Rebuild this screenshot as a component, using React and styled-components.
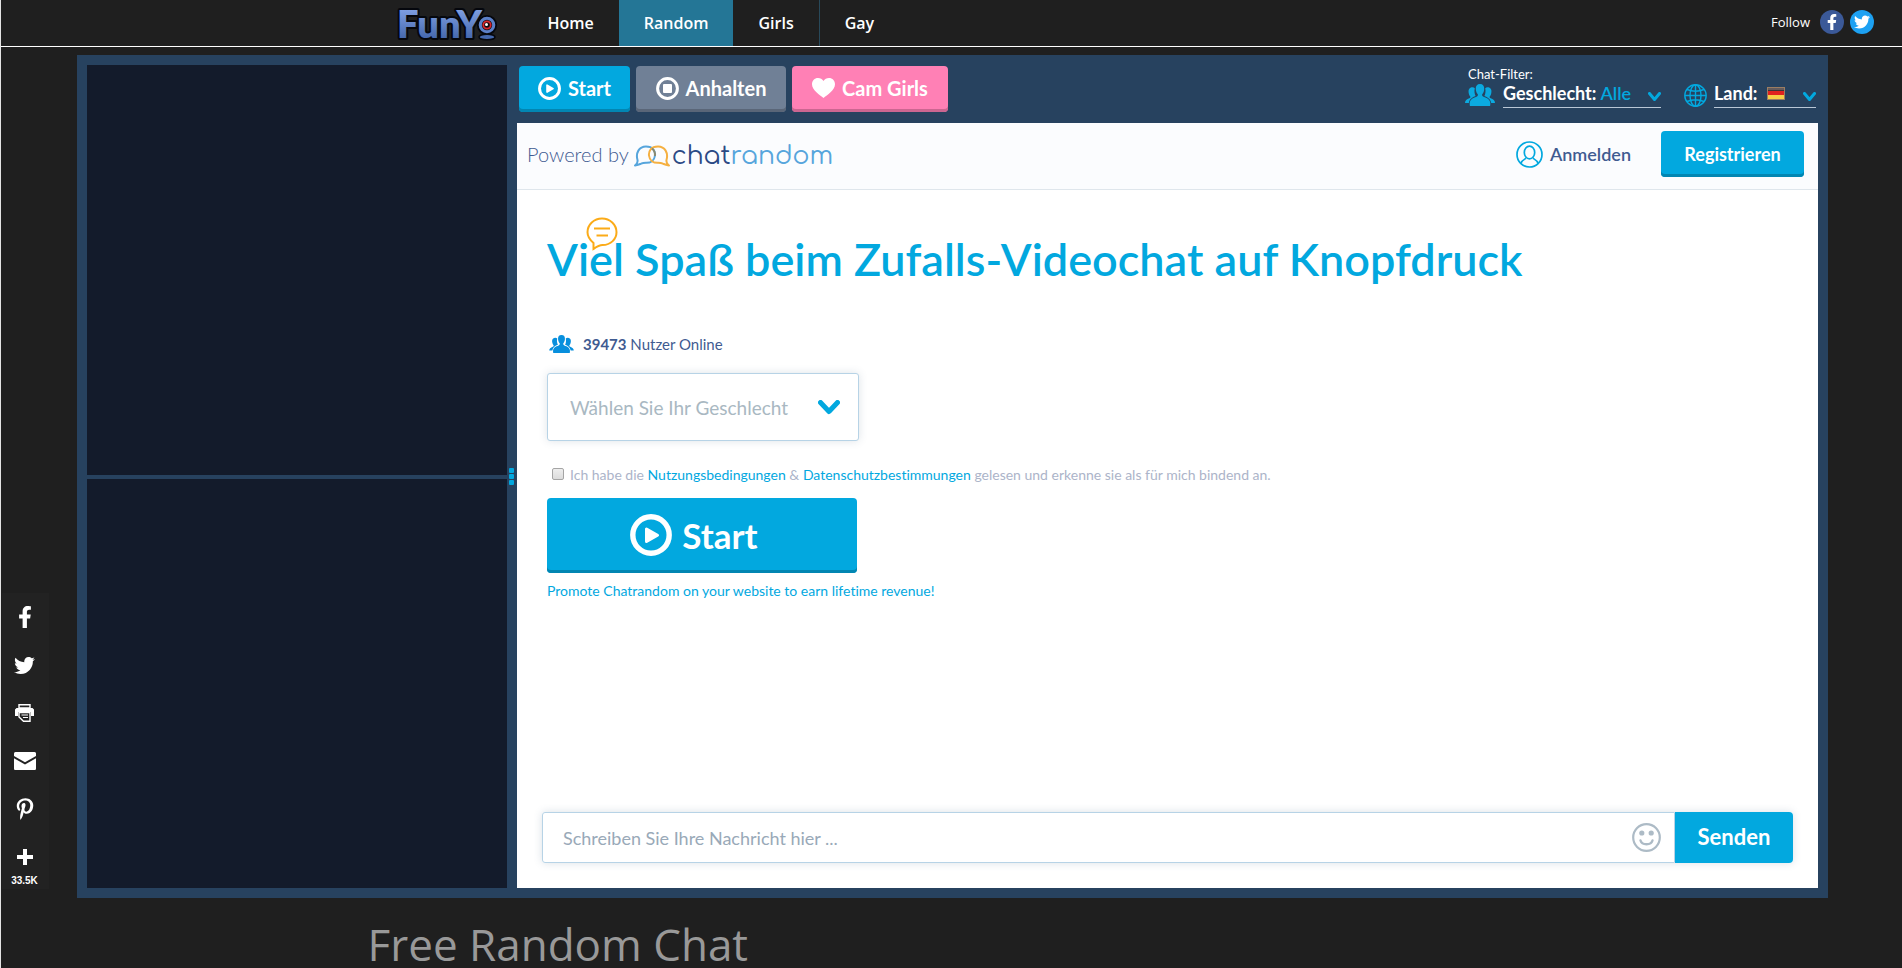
import React from "react";
import styled, { createGlobalStyle, css } from "styled-components";
import { FaFacebookF, FaTwitter, FaPinterestP } from "react-icons/fa";

const BLUE = "#02a8df";
const FACE = `Lato, "Open Sans", sans-serif`;
const NAV_FACE = `"Open Sans", "Noto Sans", sans-serif`;

const GlobalStyle = createGlobalStyle`
  * { box-sizing: border-box; }
  body { margin: 0; background: #1f1f1f; font-family: ${FACE}; font-variant-ligatures: none; }
  button, input, select { font-family: inherit; }
  a { text-decoration: none; }
`;

const Page = styled.div`
  min-height: 100vh;
  border-left: 1px solid #e4e4e4;
  display: flex;
  flex-direction: column;
`;

/* ---------- site header ---------- */
const Header = styled.header`
  display: grid;
  grid-template-columns: 1fr minmax(auto, 1170px) 1fr;
  height: 47px;
  border-bottom: 1px solid #fff;
  font-family: ${NAV_FACE};
`;
const Bar = styled.div`
  grid-column: 2;
  display: flex;
  padding-left: 29px;
`;
const LogoLink = styled.a`
  display: flex;
  align-items: center;
  width: 127px;
  svg { display: block; overflow: visible; }
`;
const Nav = styled.nav`
  display: flex;
`;
const NavLink = styled.a`
  display: flex;
  align-items: center;
  padding: 0 25px;
  font-size: 16px;
  font-weight: 600;
  color: #fff;
  background: ${(p) => (p.$active ? "#247696" : "transparent")};
  border-right: ${(p) => (p.$divided ? "1px solid #28495a" : "0")};
`;
const Follow = styled.div`
  display: flex;
  align-items: center;
  justify-content: flex-end;
  gap: 6px;
  padding-right: 28px;
  padding-bottom: 2px;
  font-size: 13px;
  color: #fff;
  span { margin-right: 4px; }
`;
const Round = styled.a`
  display: grid;
  place-items: center;
  width: 24px;
  height: 24px;
  border-radius: 50%;
  color: #fff;
  background: ${(p) => p.$color};
`;

/* ---------- chat frame ---------- */
const Frame = styled.main`
  display: flex;
  gap: 10px;
  margin: 8px 74px 0 76px;
  padding: 10px;
  min-height: calc(100vh - 125px);
  background: #27425f;
`;
const Cameras = styled.section`
  position: relative;
  flex: 0 0 420px;
  display: flex;
  flex-direction: column;
  gap: 4px;
`;
const Camera = styled.div`
  flex: 1;
  background: #131b2b;
`;
const Grip = styled.div`
  position: absolute;
  left: 100%;
  top: 50%;
  margin: -9px 0 0 2px;
  display: grid;
  gap: 1px;
  i { width: 5px; height: 5px; border-radius: 1px; background: ${BLUE}; }
`;
const Chat = styled.section`
  flex: 1;
  min-width: 0;
  display: flex;
  flex-direction: column;
`;
const Toolbar = styled.div`
  display: flex;
  justify-content: space-between;
  height: 58px;
  padding: 1px 2px 0;
`;
const Group = styled.div`
  display: flex;
  gap: 6px;
`;
const solid = css`
  display: flex;
  align-items: center;
  justify-content: center;
  border: 0;
  border-radius: 4px;
  color: #fff;
  font-weight: 700;
  background: ${(p) => p.$color || BLUE};
  box-shadow: inset 0 -3px 0 ${(p) => p.$edge || "#0286b2"};
`;
const ToolButton = styled.button`
  ${solid}
  height: 46px;
  width: ${(p) => p.$width};
  gap: 7px;
  padding: 0 0 2px;
  font-size: 20px;
`;
const Filters = styled.div`
  display: grid;
  grid-template-columns: auto auto;
  column-gap: 23px;
  grid-template-rows: 18px 24px;
  align-content: start;
`;
const FilterTitle = styled.div`
  grid-column: 1 / -1;
  padding-left: 3px;
  font-size: 13px;
  line-height: 16px;
  color: #fff;
`;
const Filter = styled.div`
  display: flex;
  gap: ${(p) => p.$gap};
  svg { flex: none; }
`;
const FilterField = styled.label`
  position: relative;
  display: flex;
  gap: 4px;
  width: ${(p) => p.$width};
  height: 24px;
  padding-bottom: 6px;
  align-items: center;
  border-bottom: 1px solid #b9c7d6;
  font-size: 18px;
  font-weight: 700;
  color: #fff;
  white-space: nowrap;
  svg.flag { margin: 2px 0 0 5px; }
`;
const FilterSelect = styled.select`
  appearance: none;
  flex: 1;
  min-width: 0;
  padding: 0;
  border: 0;
  outline: 0;
  background: transparent;
  color: ${BLUE};
  font-size: 18px;
  font-weight: 600;
`;
const Panel = styled.div`
  flex: 1;
  display: flex;
  flex-direction: column;
  background: #fff;
`;
const PanelHead = styled.div`
  display: flex;
  align-items: center;
  height: 67px;
  padding: 0 14px 4px 10px;
  background: #fbfcfe;
  border-bottom: 1px solid #dfe6ec;
`;
const Powered = styled.div`
  display: flex;
  align-items: center;
  gap: 5px;
  flex: 1;
  font-size: 20px;
  font-weight: 300;
  color: #3f5b91;
`;
const Brand = styled.a`
  display: flex;
  align-items: center;
  gap: 2px;
  padding-top: 4px;
  font-family: Comfortaa, Lato, sans-serif;
  font-size: 25px;
  font-weight: 400;
  line-height: 28px;
  color: #2b4a85;
  span span { color: #56a5dc; }
`;
const Login = styled.a`
  display: flex;
  align-items: center;
  gap: 7px;
  margin-right: 30px;
  font-size: 18px;
  font-weight: 600;
  color: #3f5b91;
`;
const Register = styled.button`
  ${solid}
  width: 143px;
  height: 46px;
  padding: 0 0 1px;
  font-size: 18px;
`;
const Content = styled.div`
  flex: 1;
  display: flex;
  flex-direction: column;
  align-items: flex-start;
  padding: 43px 30px 0;
`;
const Title = styled.h1`
  position: relative;
  margin: 0;
  font-size: 45px;
  line-height: 53px;
  font-weight: 600;
  color: ${BLUE};
  svg { position: absolute; left: 39px; top: -16px; }
`;
const Online = styled.div`
  display: flex;
  align-items: center;
  gap: 9px;
  height: 20px;
  margin: 48px 0 19px 2px;
  font-size: 15px;
  color: #3f5b91;
`;
const Gender = styled.div`
  display: grid;
  width: 312px;
  height: 68px;
  > * { grid-area: 1 / 1; }
  svg { justify-self: end; align-self: center; margin-right: 19px; pointer-events: none; }
`;
const GenderSelect = styled.select`
  appearance: none;
  padding: 0 22px;
  border: 1px solid #b7d3e6;
  border-radius: 3px;
  outline: 0;
  background: #fff;
  box-shadow: 0 0 8px rgba(70, 100, 130, 0.18);
  color: #a9b8c2;
  font-size: 19px;
`;
const Terms = styled.div`
  display: flex;
  align-items: center;
  gap: 6px;
  height: 20px;
  margin: 23px 0 14px 5px;
  font-size: 14px;
  color: #acb4c9;
  a { color: ${BLUE}; }
`;
const Tick = styled.input`
  appearance: none;
  width: 12px;
  height: 12px;
  margin: 0;
  border: 1px solid #a5a5a5;
  border-radius: 2px;
  background: linear-gradient(#eee, #dcdcdc);
`;
const BigStart = styled.button`
  ${solid}
  width: 310px;
  height: 75px;
  gap: 10px;
  padding: 0 16px 2px 0;
  font-size: 35px;
`;
const Promote = styled.a`
  margin-top: 9px;
  font-size: 14px;
  line-height: 18px;
  color: ${BLUE};
`;
const Composer = styled.form`
  display: flex;
  height: 51px;
  margin: 0 25px 25px;
  border-radius: 3px;
  box-shadow: 0 0 8px rgba(70, 100, 130, 0.2);
`;
const Field = styled.div`
  flex: 1;
  display: flex;
  align-items: center;
  padding: 0 13px 0 20px;
  border: 1px solid #b7d3e6;
  border-radius: 3px 0 0 3px;
`;
const Message = styled.input`
  flex: 1;
  padding: 0;
  border: 0;
  outline: 0;
  background: transparent;
  font-size: 18px;
  &::placeholder { color: #99a9b8; opacity: 1; }
`;
const Smile = styled.button`
  display: flex;
  padding: 0;
  border: 0;
  background: transparent;
`;
const Send = styled.button`
  width: 118px;
  padding: 0 0 2px;
  border: 0;
  border-radius: 0 4px 4px 0;
  background: ${BLUE};
  color: #fff;
  font-size: 22px;
  font-weight: 700;
`;

/* ---------- below the frame ---------- */
const Article = styled.article`
  width: 100%;
  max-width: 1170px;
  margin: 0 auto;
  padding: 24px 0 0 1px;
  h2 {
    margin: 0;
    font-family: ${NAV_FACE};
    font-size: 44px;
    line-height: 44px;
    font-weight: 400;
    color: #999;
  }
`;
const ShareRail = styled.aside`
  position: fixed;
  left: 2px;
  bottom: 79px;
  width: 47px;
  padding-right: 2px;
  display: flex;
  flex-direction: column;
  background: #222;
  color: #fff;
  text-align: center;
  font: 700 10px/16px "Liberation Sans", Arial, sans-serif;
`;
const Share = styled.a`
  display: grid;
  place-items: center;
  height: ${(p) => (p.$last ? "40px" : "48px")};
  padding-top: ${(p) => (p.$last ? "8px" : "0")};
  color: #fff;
`;

const Play = ({ size }) => (
  <svg width={size} height={size} viewBox="0 0 42 42" aria-hidden="true">
    <circle cx="21" cy="21" r="18.2" fill="none" stroke="#fff" strokeWidth="5.4" />
    <path d="M16.500 15v12.500l11-6.300z" fill="#fff" stroke="#fff" strokeWidth="3" strokeLinejoin="round" />
  </svg>
);
const Stop = () => (
  <svg width="23" height="23" viewBox="0 0 23 23" aria-hidden="true">
    <circle cx="11.500" cy="11.500" r="9.900" fill="none" stroke="#fff" strokeWidth="3" />
    <rect x="7" y="7" width="9" height="9" rx="1" fill="#fff" />
  </svg>
);
const Heart = () => (
  <svg width="23" height="20" viewBox="0 0 23 20" aria-hidden="true">
    <path d="M11.500 20C8 17 0 12.500 0 6.300 0 2.500 2.600 0 6 0c2.400 0 4.300 1.200 5.500 3C12.700 1.200 14.600 0 17 0c3.400 0 6 2.500 6 6.300C23 12.500 15 17 11.500 20z" fill="#fff" />
  </svg>
);
const People = ({ width, height, color }) => (
  <svg width={width} height={height} viewBox="0 0 30 22" fill={color} aria-hidden="true">
    <path d="M15 0c-3 0-4.400 2-4.200 5 .1 2 .8 4 2 5.200.3 1.300-.2 2-1.300 2.500-3.500 1.400-6.500 2.500-6.800 6.300-.1 1 0 2 .2 3h20.200c.2-1 .3-2 .2-3-.3-3.800-3.300-4.900-6.800-6.300-1.100-.5-1.600-1.200-1.300-2.500 1.200-1.200 1.900-3.200 2-5.200C19.400 2 18 0 15 0z" />
    <path d="M9.800 4.200C8.700 3 6 2.900 4.500 4.500c-1 1-1.200 3-.7 4.900.3 1.300.8 2.400 1.500 3 .2 1-.2 1.500-1 1.900C1.800 15.500 0 16.300 0 19h3.800c.8-4.300 3.600-5.800 6.800-7.100-.9-1.600-1.600-4.700-.8-7.700z" />
    <path d="M20.200 4.200c1.100-1.200 3.800-1.300 5.300.3 1 1 1.200 3 .7 4.900-.3 1.300-.8 2.400-1.500 3-.2 1 .2 1.500 1 1.900C28.200 15.500 30 16.300 30 19h-3.800c-.8-4.300-3.600-5.800-6.800-7.100.9-1.600 1.600-4.700.8-7.700z" />
  </svg>
);
const Chevron = ({ width, height, stroke, ...rest }) => (
  <svg width={width} height={height} viewBox={`0 0 ${width} ${height}`} aria-hidden="true" {...rest}>
    <path
      d={`M${stroke / 2} ${stroke / 2}L${width / 2} ${height - stroke / 2 - 1}L${width - stroke / 2} ${stroke / 2}`}
      fill="none" stroke={BLUE} strokeWidth={stroke} strokeLinecap="round" strokeLinejoin="round"
    />
  </svg>
);
const FieldChevron = styled(Chevron)`
  position: absolute;
  right: 0;
  top: 8px;
  pointer-events: none;
`;
const Globe = () => (
  <svg width="23" height="23" viewBox="0 0 23 23" fill="none" stroke={BLUE} strokeWidth="1.400" aria-hidden="true">
    <circle cx="11.500" cy="11.500" r="10.700" />
    <ellipse cx="11.500" cy="11.500" rx="5.500" ry="10.700" />
    <path d="M11.500 1v21M1 11.500h21M3 5.500c5 2 12 2 17 0M3 17.500c5-2 12-2 17 0" />
  </svg>
);
const Flag = () => (
  <svg className="flag" width="18" height="13" viewBox="0 0 18 13" role="img" aria-label="Deutschland">
    <rect width="18" height="13" fill="#9c7d62" />
    <rect x="1" y="1" width="16" height="4" fill="#3c3335" />
    <rect x="1" y="4" width="16" height="4" fill="#e0221f" />
    <rect x="1" y="8" width="16" height="4" fill="#f6cf47" />
    <rect x="1" y="1" width="16" height="2" fill="#fff" opacity=".2" />
  </svg>
);
const User = () => (
  <svg width="27" height="27" viewBox="0 0 27 27" fill="none" stroke={BLUE} strokeWidth="1.700" aria-hidden="true">
    <circle cx="13.500" cy="13.500" r="12.500" />
    <ellipse cx="13.500" cy="11.500" rx="5.200" ry="6.300" />
    <path d="M4.800 22.500c.8-3 2.900-3.800 5.200-5.200M22.200 22.500c-.8-3-2.900-3.800-5.200-5.200" />
  </svg>
);
const Bubbles = () => (
  <svg width="36" height="22" viewBox="0 0 36 22" fill="none" strokeWidth="2" strokeLinejoin="round" aria-hidden="true">
    <path d="M1 20.500c2-1.500 3-3 2.500-5.500C1.500 8 5 1.500 12 1.500S21.500 6 21 10.500c-.5 5-4.500 7.500-9 7.300-2 0-3 0-5 .9-2 .8-4 1.400-6 1.800z" stroke="#56a5dc" />
    <path d="M35 20.500c-2-1.500-3-3-2.500-5.500C34.500 8 31 1.500 24 1.500S14.500 6 15 10.500c.5 5 4.500 7.500 9 7.300 2 0 3 0 5 .9 2 .8 4 1.400 6 1.800z" stroke="#f5b041" />
    <path d="M18 3.500c2.500 2 3.200 5 2.900 7.500" stroke="#8b8a70" />
  </svg>
);
const Speech = () => (
  <svg width="32" height="34" viewBox="0 0 32 34" fill="none" stroke="#fbab18" strokeWidth="2" aria-hidden="true">
    <path d="M7.500 26v6c3-2 5.500-3.700 9-3.900C25 27.800 30.500 22 30.500 15.300 30.500 7.500 24 1.500 16 1.500S1.500 7.500 1.500 15.300c0 4.200 2.500 7.700 6 10.700z" />
    <path d="M8 11.500h16M10.500 18.500h11.500" />
  </svg>
);
const SmileIcon = () => (
  <svg width="29" height="29" viewBox="0 0 29 29" fill="none" stroke="#adbbc6" aria-hidden="true">
    <circle cx="14.500" cy="14.500" r="13.300" strokeWidth="2.200" />
    <path d="M8.500 17.500c1.500 5 10.500 5 12 0" strokeWidth="2.400" strokeLinecap="round" />
    <circle cx="9.800" cy="10" r="2.600" fill="#adbbc6" stroke="none" />
    <circle cx="19.200" cy="10" r="2.600" fill="#adbbc6" stroke="none" />
  </svg>
);
const FunYo = () => (
  <svg width="102" height="36" viewBox="0 0 102 36" role="img" aria-label="FunYo">
    <defs>
      <linearGradient id="steel" x1="0" y1="0" x2="0" y2="1">
        <stop offset="0.2" stopColor="#7f9fe2" />
        <stop offset="0.9" stopColor="#3f62a8" />
      </linearGradient>
    </defs>
    <text x="1" y="33" fontFamily="Lato, sans-serif" fontWeight="800" fontSize="38" fill="url(#steel)" stroke="#05070d" strokeWidth="4" strokeLinejoin="round" paintOrder="stroke">FunY</text>
    <ellipse cx="91" cy="32" rx="8" ry="2.800" fill="#4468ae" stroke="#05070d" strokeWidth="1.500" />
    <circle cx="91" cy="20" r="9.200" fill="#5c80c8" stroke="#05070d" strokeWidth="1.800" />
    <circle cx="91" cy="20" r="5.200" fill="#0d0d12" />
    <circle cx="91" cy="20" r="3.700" fill="none" stroke="#d8262c" strokeWidth="1.800" />
    <circle cx="90.500" cy="19.500" r="1.500" fill="#fff" />
  </svg>
);
const Printer = () => (
  <svg width="19" height="18" viewBox="0 0 19 18" aria-hidden="true">
    <path d="M4 .8h11V4H4z" fill="none" stroke="#fff" strokeWidth="1.400" />
    <path d="M1.500 4h16L19 5.500V12h-3V8H3v4H0V5.500z" fill="#fff" />
    <path d="M4 8.500h11v8.700H8.500L4 13z" fill="none" stroke="#fff" strokeWidth="1.400" />
    <path d="M6.500 11h6.500M8 13.500h5" stroke="#fff" strokeWidth="1.200" />
  </svg>
);
const Mail = () => (
  <svg width="22" height="18" viewBox="0 0 22 18" fill="#fff" aria-hidden="true">
    <path d="M1.500 0h19C21.500 0 22 .8 22 1.600V4L11 10.200 0 4V1.600C0 .8.500 0 1.500 0z" />
    <path d="M0 6.200l11 6.200 11-6.200v10.200c0 1-.6 1.600-1.600 1.600H1.600C.6 18 0 17.400 0 16.400z" />
  </svg>
);
const Plus = () => (
  <svg width="16" height="16" viewBox="0 0 16 16" aria-hidden="true">
    <path d="M6 0h4v6h6v4h-6v6H6v-6H0V6h6z" fill="#fff" />
  </svg>
);

export default function App() {
  return (
    <Page>
      <GlobalStyle />
      <Header>
        <Bar>
          <LogoLink href="#"><FunYo /></LogoLink>
          <Nav>
            <NavLink href="#home">Home</NavLink>
            <NavLink href="#random" $active>Random</NavLink>
            <NavLink href="#girls" $divided>Girls</NavLink>
            <NavLink href="#gay">Gay</NavLink>
          </Nav>
        </Bar>
        <Follow>
          <span>Follow</span>
          <Round href="#facebook" aria-label="Facebook" $color="#3b5998"><FaFacebookF size={16} /></Round>
          <Round href="#twitter" aria-label="Twitter" $color="#1da1f2"><FaTwitter size={16} /></Round>
        </Follow>
      </Header>

      <Frame>
        <Cameras>
          <Camera />
          <Camera />
          <Grip><i /><i /><i /></Grip>
        </Cameras>
        <Chat>
          <Toolbar>
            <Group>
              <ToolButton type="button" $width="111px"><Play size={23} />Start</ToolButton>
              <ToolButton type="button" $width="150px" $color="#708096" $edge="#5a6678"><Stop />Anhalten</ToolButton>
              <ToolButton type="button" $width="156px" $color="#ff80b5" $edge="#cc6691"><Heart />Cam Girls</ToolButton>
            </Group>
            <Filters>
              <FilterTitle>Chat-Filter:</FilterTitle>
              <Filter $gap="8px">
                <People width={30} height={22} color="#0baae0" />
                <FilterField $width="158px">
                  Geschlecht:
                  <FilterSelect defaultValue="Alle"><option>Alle</option></FilterSelect>
                  <FieldChevron width={13} height={10} stroke={3} />
                </FilterField>
              </Filter>
              <Filter $gap="7px">
                <Globe />
                <FilterField $width="102px">
                  Land: <Flag />
                  <FilterSelect defaultValue="de"><option value="de" /></FilterSelect>
                  <FieldChevron width={13} height={10} stroke={3} />
                </FilterField>
              </Filter>
            </Filters>
          </Toolbar>
          <Panel>
            <PanelHead>
              <Powered>
                Powered by
                <Brand href="#chatrandom"><Bubbles /><span>chat<span>random</span></span></Brand>
              </Powered>
              <Login href="#login"><User />Anmelden</Login>
              <Register type="button">Registrieren</Register>
            </PanelHead>
            <Content>
              <Title>Viel Spaß beim Zufalls-Videochat auf Knopfdruck<Speech /></Title>
              <Online>
                <People width={25} height={18} color="#078fdd" />
                <span><b>39473</b> Nutzer Online</span>
              </Online>
              <Gender>
                <GenderSelect aria-label="Geschlecht" defaultValue="0">
                  <option value="0">Wählen Sie Ihr Geschlecht</option>
                </GenderSelect>
                <Chevron width={22} height={15} stroke={5} />
              </Gender>
              <Terms>
                <Tick type="checkbox" id="terms" />
                <label htmlFor="terms">
                  Ich habe die <a href="#terms">Nutzungsbedingungen</a> &amp; <a href="#privacy">Datenschutzbestimmungen</a> gelesen und erkenne sie als für mich bindend an.
                </label>
              </Terms>
              <BigStart type="button"><Play size={42} />Start</BigStart>
              <Promote href="#promote">Promote Chatrandom on your website to earn lifetime revenue!</Promote>
            </Content>
            <Composer onSubmit={(e) => e.preventDefault()}>
              <Field>
                <Message type="text" aria-label="Nachricht" placeholder="Schreiben Sie Ihre Nachricht hier ..." />
                <Smile type="button" aria-label="Emoji"><SmileIcon /></Smile>
              </Field>
              <Send type="submit">Senden</Send>
            </Composer>
          </Panel>
        </Chat>
      </Frame>

      <Article><h2>Free Random Chat</h2></Article>

      <ShareRail>
        <Share href="#fb" aria-label="Facebook"><FaFacebookF size={22} /></Share>
        <Share href="#tw" aria-label="Twitter"><FaTwitter size={21} /></Share>
        <Share href="#print" aria-label="Print"><Printer /></Share>
        <Share href="#mail" aria-label="E-Mail"><Mail /></Share>
        <Share href="#pin" aria-label="Pinterest"><FaPinterestP size={22} /></Share>
        <Share href="#more" aria-label="More" $last><Plus /></Share>
        33.5K
      </ShareRail>
    </Page>
  );
}
